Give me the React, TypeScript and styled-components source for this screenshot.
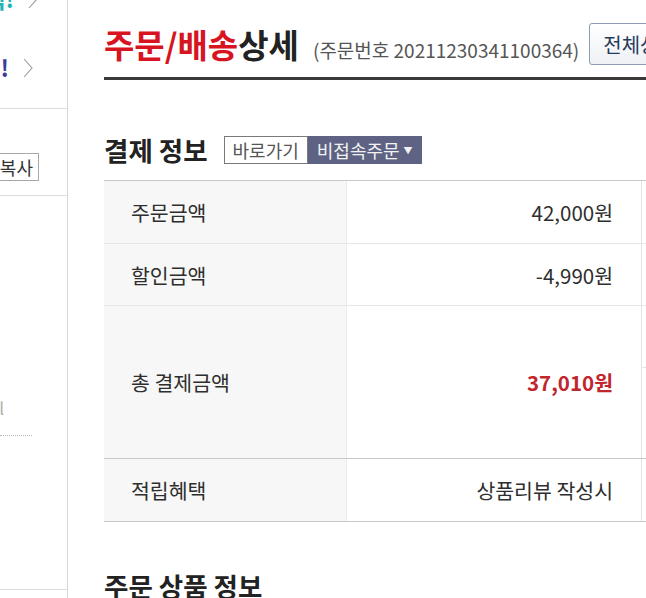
import styled, { createGlobalStyle } from 'styled-components'

const GlobalStyle = createGlobalStyle`
  * {
    box-sizing: border-box;
  }

  body {
    margin: 0;
    overflow: hidden;
    background: #fff;
    font-family: 'Noto Sans CJK KR', 'Noto Sans', sans-serif;
    color: #333;
  }
`

interface PromoItemProps {
  readonly $inset: number
}

interface PromoTextProps {
  readonly $color: string
}

interface TabProps {
  readonly $active?: boolean
}

interface RowProps {
  readonly $height: number
  readonly $dark?: boolean
}

interface ValueProps {
  readonly $strong?: boolean
}

const Page = styled.div`
  background: #fff;
  display: flex;
  height: 598px;
  overflow: hidden;
  width: 646px;
`

const Sidebar = styled.aside`
  border-right: 1px solid #d6d6d6;
  display: flex;
  flex-direction: column;
  flex-shrink: 0;
  overflow: hidden;
  width: 68px;
`

const PromoList = styled.ul`
  border-bottom: 1px solid #dcdcdc;
  list-style: none;
  margin: -36px 0 0;
  padding: 0 0 6px;
`

const PromoItem = styled.li<PromoItemProps>`
  align-items: center;
  column-gap: 14px;
  display: flex;
  height: 69px;
  justify-content: flex-end;
  padding-right: ${(props) => props.$inset}px;
  white-space: nowrap;
`

const PromoText = styled.span<PromoTextProps>`
  color: ${(props) => props.$color};
  flex-shrink: 0;
  font-size: 23px;
  font-weight: 700;
  line-height: 1;
`

const Chevron = styled.svg`
  flex-shrink: 0;
  height: 20px;
  width: 10px;
`

const CopyBlock = styled.div`
  border-bottom: 1px solid #dcdcdc;
  display: flex;
  justify-content: flex-end;
  padding: 44px 28px 14px 0;
`

const CopyButton = styled.button`
  background: #fff;
  border: 1px solid #a8a8a8;
  color: #333;
  flex-shrink: 0;
  font-family: inherit;
  font-size: 18px;
  height: 28px;
  line-height: 26px;
  padding: 0 5px;
  white-space: nowrap;
`

const NoticeBlock = styled.div`
  border-bottom: 1px solid #dcdcdc;
  flex: none;
  height: 394px;
  padding-top: 200px;
`

const NoticeItem = styled.div`
  border-bottom: 1px dotted #b8b8b8;
  color: #b0b0b0;
  display: flex;
  font-size: 17px;
  justify-content: flex-end;
  line-height: 24px;
  margin-right: 35px;
  padding: 0 28px 15px 0;
  white-space: nowrap;

  span {
    flex-shrink: 0;
  }
`

const Main = styled.main`
  flex-shrink: 0;
  padding-left: 36px;
  width: 800px;
`

const Header = styled.header`
  align-items: flex-start;
  border-bottom: 3px solid #3a3a3a;
  display: flex;
  padding: 23px 0 12px;
`

const TitleGroup = styled.div`
  align-items: baseline;
  display: flex;
  margin-top: 2px;
  white-space: nowrap;
`

const PageTitle = styled.h1`
  color: #222;
  font-size: 33px;
  font-weight: 700;
  line-height: 38px;
  margin: 0;
`

const Accent = styled.span`
  color: #d7141f;
`

const OrderNo = styled.span`
  color: #555;
  font-size: 19px;
  margin-left: 14px;
`

const HeaderButton = styled.button`
  background: linear-gradient(#ffffff, #eef0f4);
  border: 1px solid #8e9bb5;
  border-radius: 3px;
  color: #283a5c;
  flex-shrink: 0;
  font-family: inherit;
  font-size: 20px;
  height: 42px;
  margin-left: 10px;
  padding: 0 13px;
  white-space: nowrap;
`

const SectionHead = styled.div<{ $gap: number }>`
  align-items: center;
  display: flex;
  height: 30px;
  margin-top: ${(props) => props.$gap}px;
`

const SectionTitle = styled.h2`
  color: #222;
  font-size: 26.5px;
  font-weight: 700;
  line-height: 30px;
  margin: 0;
  white-space: nowrap;
`

const Tabs = styled.div`
  display: flex;
  height: 28px;
  margin-left: 16px;
`

const Tab = styled.span<TabProps>`
  align-items: center;
  background: ${(props) => (props.$active ? '#5e6383' : '#fff')};
  border: 1px solid ${(props) => (props.$active ? '#5e6383' : '#7a7a7a')};
  color: ${(props) => (props.$active ? '#f2f2f2' : '#555')};
  display: flex;
  font-size: 18px;
  padding: 0 8px;
  white-space: nowrap;
`

const Caret = styled.span`
  font-size: 9px;
  margin-left: 4px;
`

const Table = styled.div`
  border-top: 1px solid #c8c8c8;
  margin-top: 15px;
`

const Row = styled.div<RowProps>`
  border-bottom: 1px solid ${(props) => (props.$dark ? '#c8c8c8' : '#e6e6e6')};
  display: grid;
  grid-template-columns: 243px 295px 1fr;
  height: ${(props) => props.$height}px;
`

const Label = styled.div`
  align-items: center;
  background: #f7f7f7;
  border-right: 1px solid #ececec;
  color: #2e2e2e;
  display: flex;
  font-size: 20.5px;
  padding-left: 27px;
`

const Value = styled.div<ValueProps>`
  align-items: center;
  border-right: 1px solid #e3e3e3;
  color: ${(props) => (props.$strong ? '#c0262c' : '#2e2e2e')};
  display: flex;
  font-size: 20.5px;
  font-weight: ${(props) => (props.$strong ? 700 : 400)};
  justify-content: flex-end;
  padding-right: 28px;
`

const Side = styled.div`
  display: flex;
  flex-direction: column;
`

const SideSlot = styled.div`
  border-bottom: 1px solid #e6e6e6;
  height: 62px;
`

const rows = [
  { label: '주문금액', value: '42,000원', height: 63 },
  { label: '할인금액', value: '-4,990원', height: 62 },
  { label: '총 결제금액', value: '37,010원', height: 153, strong: true, dark: true },
  { label: '적립혜택', value: '상품리뷰 작성시', height: 63, dark: true },
]

const ChevronIcon = () => (
  <Chevron viewBox="0 0 10 20">
    <polyline points="1,1 9,10 1,19" fill="none" stroke="#9a9a9a" strokeWidth="1.1" />
  </Chevron>
)

const App = () => (
  <>
    <GlobalStyle />
    <Page>
      <Sidebar>
        <PromoList>
          <PromoItem $inset={29}>
            <PromoText $color="#23b3b5">신규회원 혜택!</PromoText>
            <ChevronIcon />
          </PromoItem>
          <PromoItem $inset={34}>
            <PromoText $color="#3c3a9c">쿠폰 받기!</PromoText>
            <ChevronIcon />
          </PromoItem>
        </PromoList>
        <CopyBlock>
          <CopyButton>주소복사</CopyButton>
        </CopyBlock>
        <NoticeBlock>
          <NoticeItem>
            <span>배송안내 l</span>
          </NoticeItem>
        </NoticeBlock>
      </Sidebar>

      <Main>
        <Header>
          <TitleGroup>
            <PageTitle>
              <Accent>주문/배송</Accent>상세
            </PageTitle>
            <OrderNo>(주문번호 20211230341100364)</OrderNo>
          </TitleGroup>
          <HeaderButton>전체상품 배송조회</HeaderButton>
        </Header>

        <SectionHead $gap={55}>
          <SectionTitle>결제 정보</SectionTitle>
          <Tabs>
            <Tab>바로가기</Tab>
            <Tab $active>
              비접속주문<Caret>▼</Caret>
            </Tab>
          </Tabs>
        </SectionHead>

        <Table>
          {rows.map((row) => (
            <Row key={row.label} $height={row.height} $dark={row.dark}>
              <Label>{row.label}</Label>
              <Value $strong={row.strong}>{row.value}</Value>
              <Side>{row.strong && <SideSlot />}</Side>
            </Row>
          ))}
        </Table>

        <SectionHead $gap={49}>
          <SectionTitle>주문 상품 정보</SectionTitle>
        </SectionHead>
      </Main>
    </Page>
  </>
)

export default App
